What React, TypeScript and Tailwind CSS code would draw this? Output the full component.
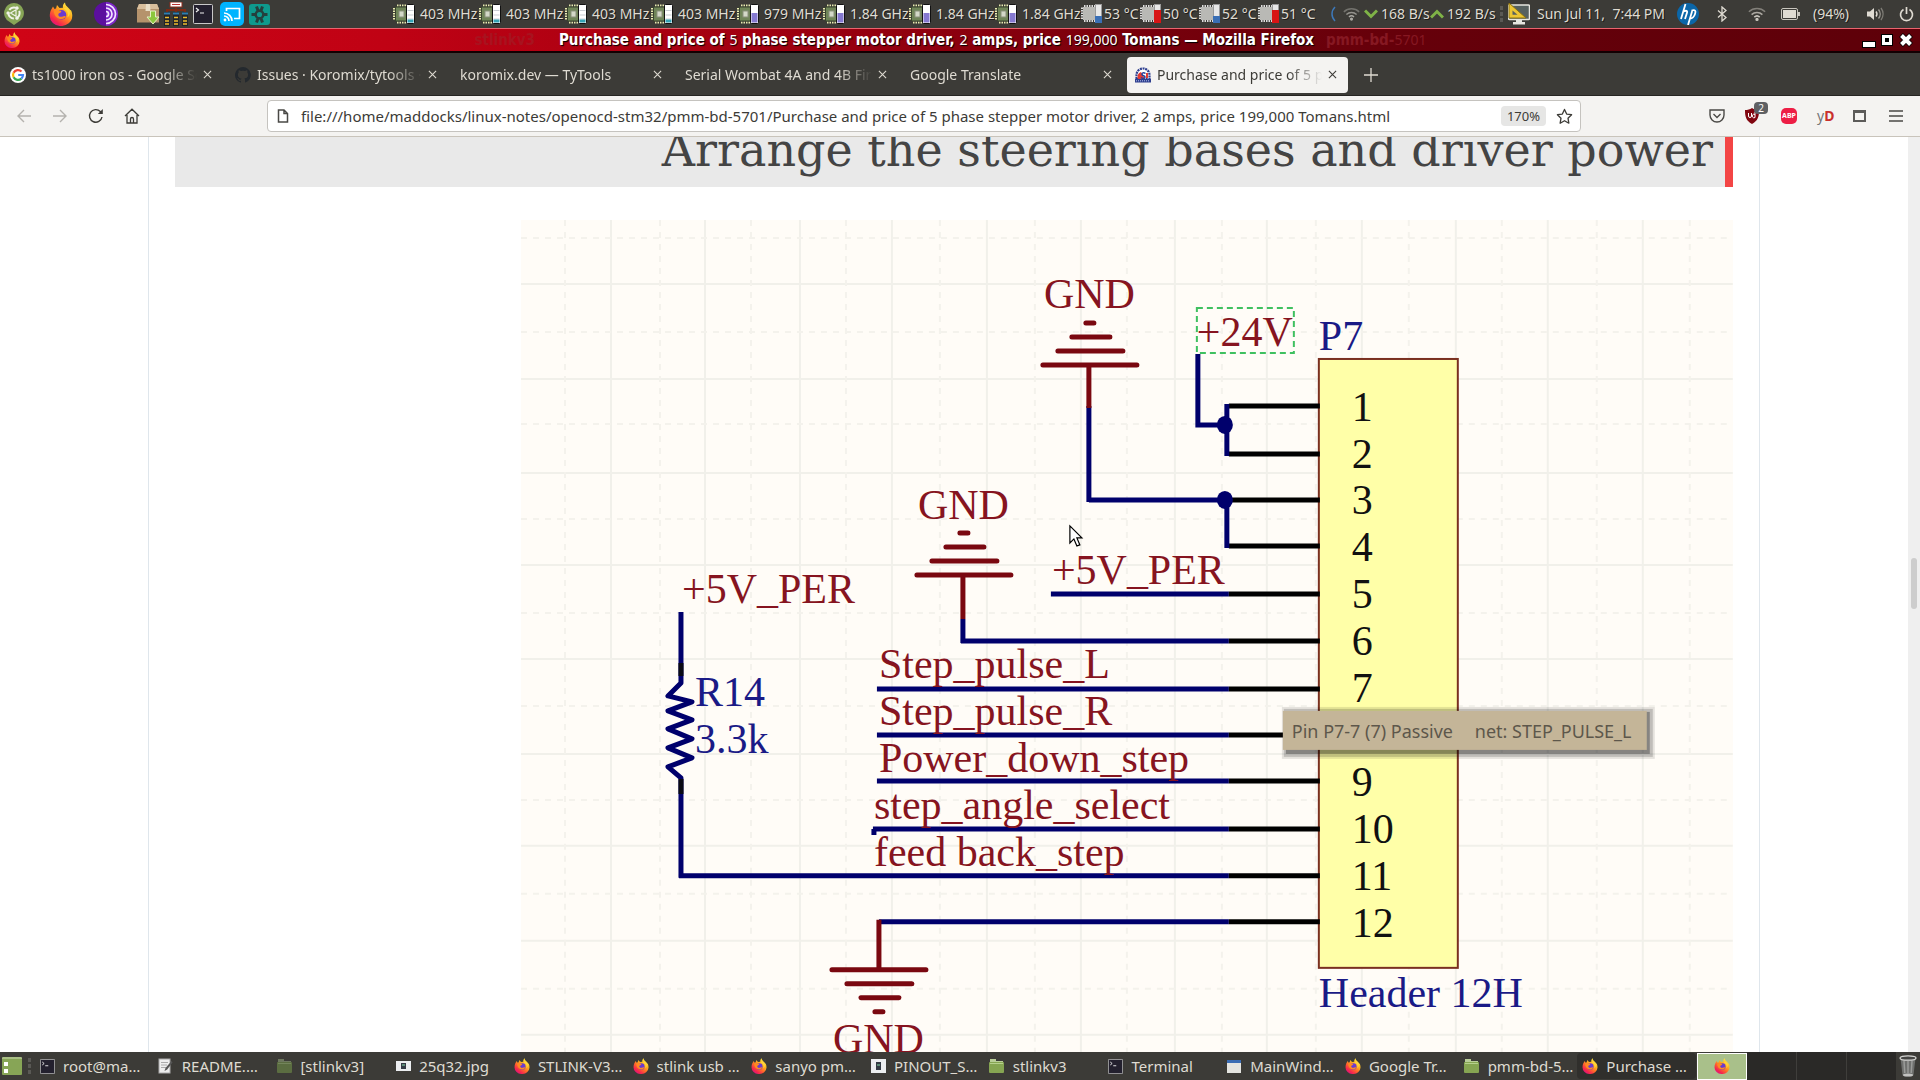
import React from "react";
import type { ReactNode } from "react";

/* ---------- icons ---------- */

function Firefox({ className }: { className: string }) {
  return (
    <svg viewBox="0 0 24 24" className={className} aria-hidden="true">
      <defs>
        <linearGradient id="fx-body" x1="0.85" y1="0.05" x2="0.2" y2="0.95">
          <stop offset="0" stopColor="#fff04a" />
          <stop offset="0.35" stopColor="#ffb01e" />
          <stop offset="0.6" stopColor="#ff6a2a" />
          <stop offset="0.85" stopColor="#f5254f" />
          <stop offset="1" stopColor="#e01580" />
        </linearGradient>
      </defs>
      <path
        d="M2 8 4 4.500 5.500 7 7 6.500 8 3 10.500 6 14 5.800C13.500 3.500 14.500 1.500 16 .5 16 3 18 4.500 20 6.500c.8.800 1.200 1.500 1.300 2l.5-.8C22.800 9.800 23.500 12 23.200 14.500A11.200 9.800 0 0 1 .8 14C.8 11.500 1.200 9.500 2 8Z"
        fill="url(#fx-body)"
      />
      <circle cx="12.500" cy="12.800" r="4.800" fill="#6a3bd0" />
      <path d="M5 8.500c2.500-1.200 4 .3 6 .3 1 0 1.500.5 1.300 1-.6 1.200-2.800 1.200-3 2.700-.1 1.500 1.500 2.700 3.700 2.200 1.800-.4 2.600-1 3.500-.5.500.5-.9 2.800-4 2.900C8 17.200 4.500 13 5 8.500Z" fill="#ff8a22" />
      <path d="M14.500 6.500c3.500 1.500 5.500 5 3.800 9 2.500-1.500 3.600-5 1.500-8-1.500-2-3.500-2.500-5.300-1Z" fill="#ffd53a" />
    </svg>
  );
}

function MateLogo() {
  return (
    <svg viewBox="0 0 20 22" className="h-[22px] w-5" aria-hidden="true">
      <path d="M10 0a10 10 0 0 1 5 18.600L10 22l-5-3.400A10 10 0 0 1 10 0Z" fill="#87a556" />
      <circle cx="10" cy="10" r="5.600" fill="none" stroke="#f0f3e8" strokeWidth="2" strokeDasharray="9.700 2" strokeDashoffset="3" />
      <path d="M6.500 10 12 6.800v6.400Z" fill="none" stroke="#f0f3e8" strokeWidth="1.200" />
      <circle cx="4" cy="10" r="1.600" fill="#f0f3e8" />
      <circle cx="13" cy="4.800" r="1.600" fill="#f0f3e8" />
      <circle cx="13" cy="15.200" r="1.600" fill="#f0f3e8" />
    </svg>
  );
}

function TorIcon() {
  return (
    <svg viewBox="0 0 24 24" className="size-6" aria-hidden="true">
      <circle cx="12" cy="12" r="12" fill="#5b0f9e" />
      <path d="M12 0a12 12 0 0 1 0 24Z" fill="#7d2ac8" />
      <path d="M12 9.500a2.500 2.500 0 0 1 0 5M12 6a6 6 0 0 1 0 12M12 2.500a9.500 9.500 0 0 1 0 19" fill="none" stroke="#f3e6ff" strokeWidth="1.700" />
    </svg>
  );
}

function PackageIcon() {
  return (
    <svg viewBox="0 0 23 22" className="h-[22px] w-[23px]" aria-hidden="true">
      <path d="M2 1h18l2 5v13H0V6Z" fill="#c2a079" />
      <path d="M0 6h22v13.500H0Z" fill="#b5936c" />
      <path d="M2 1h18l2 5H0Z" fill="#d9bf9c" />
      <path d="M9 1h4l.5 7h-5Z" fill="#eadfc8" />
      <path d="M13.500 8h5v6H22l-6 7-6-7h3.500Z" fill="#8cc63c" stroke="#e4f2c4" />
    </svg>
  );
}

function NetworkIcon() {
  return (
    <svg viewBox="0 0 24 24" className="size-6" aria-hidden="true">
      <rect x="6" y="0" width="12" height="5" fill="#fff" stroke="#8c2d1c" />
      <path d="M8 2.500h8" stroke="#b33" />
      <path d="M12 5v5M3 10V8h18v2" fill="none" stroke="#7c2b16" strokeWidth="2" />
      {[0, 9, 18].map((x) => (
        <g key={x}>
          <rect x={x} y="10" width="6" height="14" fill="#20252b" />
          <path d={`M${x} 11.500h6`} stroke="#2f7fb0" strokeWidth="2" />
          <path d={`M${x + 1} 15.500h4M${x + 1} 19h4M${x + 1} 22h4`} stroke="#eebd2c" strokeWidth="1.500" />
        </g>
      ))}
    </svg>
  );
}

function TerminalIcon({ className }: { className: string }) {
  return (
    <svg viewBox="0 0 20 20" className={className} aria-hidden="true">
      <rect x=".5" y=".5" width="19" height="19" rx="1" fill="#23202e" stroke="#c9c9c9" />
      <path d="m3 4 2.500 2L3 8M7 9h4" fill="none" stroke="#f2f2f2" strokeWidth="1.200" />
    </svg>
  );
}

function CastIcon() {
  return (
    <svg viewBox="0 0 24 24" className="size-6" aria-hidden="true">
      <rect width="24" height="24" rx="5" fill="#00b4ff" />
      <path d="M6.500 9V6.500h13v10H14" fill="none" stroke="#fff" strokeWidth="1.700" />
      <path d="M4 11a8 8 0 0 1 8 8M4 14a5 5 0 0 1 5 5" fill="none" stroke="#fff" strokeWidth="1.700" />
      <circle cx="5" cy="18" r="1.400" fill="#fff" />
    </svg>
  );
}

function GearTile() {
  return (
    <svg viewBox="0 0 21 21" className="size-[21px]" aria-hidden="true">
      <rect width="21" height="21" rx="3" fill="#0e9a8d" />
      <g stroke="#24403d" strokeWidth="3">
        <path d="M7.500 2.500l1.500 4M12 14.500l1.500 4M13.500 2.500 12 6.500M9 14.500l-1.500 4M2.500 10.500h4M14.500 10.500h4" />
        <circle cx="10.500" cy="10.500" r="3.800" fill="none" strokeWidth="2.500" />
      </g>
    </svg>
  );
}

function CpuIcon({ busy }: { busy: boolean }) {
  return (
    <svg viewBox="0 0 22 20" className="h-5 w-[22px] shrink-0" aria-hidden="true">
      <path d="M4 1.500h9M4 18.500h9" stroke="#e8ecb0" strokeWidth="2" strokeDasharray="1.500 1" />
      <path d="M1 4v12" stroke="#e8ecb0" strokeWidth="2" strokeDasharray="1.500 1" />
      <rect x="2.500" y="3" width="11" height="14" fill="#6f8558" stroke="#39442c" />
      <rect x="6" y="7" width="5" height="6" fill="#d3d8c8" stroke="#8b917c" />
      <rect x="13.500" y=".5" width="8" height="19" rx="1" fill="#fff" stroke="#111" />
      {busy ? (
        <rect x="14.500" y="9" width="6" height="9.500" fill="#8579d0" />
      ) : (
        <>
          <path d="M14.500 6.500h6M14.500 11h6M14.500 15h6" stroke="#c9cdd2" />
          <rect x="14.500" y="15.500" width="6" height="3" fill="#35a3b5" />
        </>
      )}
    </svg>
  );
}

function HeatIcon({ hot }: { hot: boolean }) {
  return (
    <svg viewBox="0 0 21 20" className="h-5 w-[21px] shrink-0" aria-hidden="true">
      <path d="M3 2h11M3 17h11" stroke="#dcdcdc" strokeWidth="2" strokeDasharray="1.500 1" />
      <path d="M1 3.500v12" stroke="#dcdcdc" strokeWidth="2" strokeDasharray="1.500 1" />
      <rect x="2" y="3" width="12" height="13" fill="#b9b9b5" />
      <rect x="14.500" y=".5" width="6" height="18" fill="#e8e8e8" stroke="#9b9b9b" />
      {hot ? (
        <rect x="14" y="6" width="7" height="13" fill="#d81414" />
      ) : (
        <rect x="14" y="12" width="7" height="7" fill="#3a6fb5" />
      )}
    </svg>
  );
}

function Wifi({ className, color }: { className: string; color: string }) {
  return (
    <svg viewBox="0 0 20 16" className={className} fill="none" stroke={color} strokeWidth="1.700" aria-hidden="true">
      <path d="M1 5.500a13 13 0 0 1 18 0" opacity=".5" />
      <path d="M4 8.700a8.700 8.700 0 0 1 12 0" opacity=".8" />
      <path d="M7 11.500a4.400 4.400 0 0 1 6 0" />
      <circle cx="10" cy="14" r="1" fill={color} />
    </svg>
  );
}

function Chevron({ up }: { up?: boolean }) {
  return (
    <svg viewBox="0 0 14 10" className="h-[10px] w-[14px]" fill="none" stroke="#7fb347" strokeWidth="3" aria-hidden="true">
      {up ? <path d="m1 8.500 6-6 6 6" /> : <path d="m1 1.500 6 6 6-6" />}
    </svg>
  );
}

function MonitorIcon() {
  return (
    <svg viewBox="0 0 22 22" className="size-[22px]" aria-hidden="true">
      <rect x=".5" y="2" width="21" height="14.500" rx="1" fill="#57615f" stroke="#e6e6e0" strokeWidth="1.500" />
      <path d="M8 17h6v2h3v2.500H5V19h3Z" fill="#e6e6e0" />
      <path d="M1 0v15h17Z" fill="#ecc634" stroke="#8b7212" />
      <path d="M4.500 7.500v4.300h5Z" fill="#57615f" />
    </svg>
  );
}

function Close({ className }: { className: string }) {
  return (
    <svg viewBox="0 0 10 10" className={className} stroke="currentColor" strokeWidth="1.200" aria-hidden="true">
      <path d="m1 1 8 8M9 1 1 9" />
    </svg>
  );
}

function FolderIcon({ dim }: { dim?: boolean }) {
  return (
    <svg viewBox="0 0 15 14" className="h-[14px] w-[15px]" aria-hidden="true">
      <path d="M1 0h6v2h7v4H1Z" fill={dim ? "#6d775e" : "#b9cd98"} />
      <rect y="3" width="15" height="11" rx="1" fill={dim ? "#5b6d41" : "#86a552"} />
      <path d="M1 4.500h13" stroke={dim ? "#74855c" : "#b6cf8d"} />
    </svg>
  );
}

function NoteIcon() {
  return (
    <svg viewBox="0 0 15 16" className="h-4 w-[15px]" aria-hidden="true">
      <rect x="1" y="1" width="11" height="14" fill="#ededed" stroke="#aaa" />
      <path d="M3 4.500h7M3 7h6M3 9.500h5" stroke="#aaa" />
      <path d="m13.500 3-6 7-1 3 2.700-1.500 5.300-7Z" fill="#555" />
    </svg>
  );
}

function PictureIcon({ tall }: { tall?: boolean }) {
  return (
    <svg viewBox="0 0 15 14" className="h-[14px] w-[15px]" aria-hidden="true">
      <rect x="0" y={tall ? 0 : 2} width="15" height={tall ? 14 : 10} fill="#eceef0" />
      <rect x="5" y={tall ? 3 : 4} width="5" height={tall ? 8 : 6} fill="#333a44" />
      <path d="M6 6h3" stroke="#8da" />
    </svg>
  );
}

function WindowIcon() {
  return (
    <svg viewBox="0 0 14 13" className="h-[13px] w-[14px]" aria-hidden="true">
      <rect width="14" height="13" fill="#e4e4e0" />
      <rect width="14" height="3" fill="#3a6cb4" />
    </svg>
  );
}

/* ---------- top panel ---------- */

const clocks = ["403 MHz", "403 MHz", "403 MHz", "403 MHz", "979 MHz", "1.84 GHz", "1.84 GHz", "1.84 GHz"];
const temps = ["53 °C", "50 °C", "52 °C", "51 °C"];

function TopPanel() {
  return (
    <header className="flex h-7 shrink-0 items-center overflow-hidden bg-[#3c3b37] text-sm whitespace-nowrap text-[#dfdbd2] [text-shadow:1px_1px_0_#1d1c1a]">
      <div className="flex w-[393px] items-center pl-1">
        <button aria-label="Menu" className="w-[45px]"><MateLogo /></button>
        <button aria-label="Firefox" className="w-[45px]"><Firefox className="size-6" /></button>
        <button aria-label="Tor" className="w-[43px]"><TorIcon /></button>
        <button aria-label="Packages" className="w-[27px]"><PackageIcon /></button>
        <button aria-label="Network" className="w-[29px]"><NetworkIcon /></button>
        <button aria-label="Terminal" className="w-[27px]"><TerminalIcon className="size-5" /></button>
        <button aria-label="Cast" className="w-[29px]"><CastIcon /></button>
        <button aria-label="Settings"><GearTile /></button>
      </div>
      {clocks.map((c, i) => (
        <div key={i} className="flex w-[86px] items-center gap-[5px]">
          <CpuIcon busy={i > 3} />
          <span>{c}</span>
        </div>
      ))}
      {temps.map((t, i) => (
        <div key={i} className="flex w-[59px] items-center gap-[2px]">
          <HeatIcon hot={i % 2 === 1} />
          <span>{t}</span>
        </div>
      ))}
      <div className="ml-auto flex items-center pr-[6px]">
        <svg viewBox="0 0 6 16" className="h-4 w-[6px]" fill="none" stroke="#3d78b8" strokeWidth="1.500" aria-hidden="true">
          <path d="M4 1C0 5 0 11 4 15" />
        </svg>
        <Wifi className="ml-[6px] h-[18px] w-[17px]" color="#aaa9a3" />
        <span className="ml-1 flex w-[66px] items-center gap-[3px]"><Chevron />168 B/s</span>
        <span className="flex w-[70px] items-center gap-[3px]"><Chevron up />192 B/s</span>
        <span className="flex flex-col gap-[2px]">
          {[0, 1, 2].map((n) => <i key={n} className="block h-1 w-[3px] bg-[#5a5955]" />)}
        </span>
        <span className="ml-[5px]"><MonitorIcon /></span>
        <time className="ml-[7px] w-[140px]">Sun Jul 11,&nbsp; 7:44 PM</time>
        <svg viewBox="0 0 22 22" className="size-[22px]" role="img" aria-label="hp">
          <circle cx="11" cy="11" r="11" fill="#0b66a8" />
          <g fill="none" stroke="#fff" strokeWidth="1.800">
            <path d="M8.500 1 4 16M6.500 8.500c3-1.500 4-.5 3.500 1.200L8 16M15.500 7l-4.500 15M14.500 7.500c4-1 4.500.5 3.500 3.500s-2.500 4.500-5 4.500" />
          </g>
        </svg>
        <svg viewBox="0 0 10 16" className="ml-[18px] h-4 w-[10px]" fill="none" stroke="#dfdbd2" strokeWidth="1.300" aria-hidden="true">
          <path d="m1 4.500 8 7-4 3.500V1l4 3.500-8 7" />
        </svg>
        <Wifi className="ml-[21px] h-4 w-[18px]" color="#c9c6be" />
        <svg viewBox="0 0 19 12" className="ml-[15px] h-3 w-[19px]" aria-hidden="true">
          <rect x=".5" y=".5" width="16" height="11" rx="1.500" fill="none" stroke="#c9c6be" />
          <rect x="2" y="2" width="13" height="8" fill="#dfdbd2" />
          <path d="M18 4v4" stroke="#c9c6be" strokeWidth="2" />
        </svg>
        <span className="ml-[13px] w-[54px]">(94%)</span>
        <svg viewBox="0 0 18 14" className="h-[14px] w-[18px]" fill="none" stroke="#dfdbd2" strokeWidth="1.400" aria-hidden="true">
          <path d="M0 4.500h3L7 1v12L3 9.500H0Z" fill="#dfdbd2" stroke="none" />
          <path d="M9 4.500a4 4 0 0 1 0 5" />
          <path d="M11.500 2.500a7 7 0 0 1 0 9" opacity=".6" />
          <path d="M14 1a10 10 0 0 1 0 12" opacity=".4" />
        </svg>
        <svg viewBox="0 0 15 16" className="ml-[14px] h-4 w-[15px]" fill="none" stroke="#dfdbd2" strokeWidth="1.700" aria-hidden="true">
          <path d="M4.500 3.500a6 6 0 1 0 6 0M7.500 1v7" />
        </svg>
      </div>
    </header>
  );
}

/* ---------- window title ---------- */

function Digits({ children }: { children: ReactNode }) {
  return <span className="font-['Noto_Sans'] text-sm font-normal">{children}</span>;
}

function TitleBar() {
  return (
    <div className="flex h-[25px] shrink-0 items-center border-t border-b-2 border-t-[#e8646e] border-b-[#120002] bg-[linear-gradient(90deg,#d00416_0%,#c00214_20%,#a00010_40%,#7a000c_58%,#66000a_72%,#5e0009_100%)] pr-[7px] pl-1 font-['DejaVu_Sans_Condensed'] text-[15px] leading-5 font-bold whitespace-pre text-white [text-shadow:1px_1px_1px_#000]">
      <div className="flex flex-1 items-center">
        <Firefox className="size-4" />
        <span className="mr-[18px] ml-auto text-[#a8131f] [text-shadow:none]">stlinkv3</span>
      </div>
      <h1 className="ml-[6px]">
        Purchase and price of <Digits>5</Digits> phase stepper motor driver, <Digits>2</Digits> amps, price{" "}
        <Digits>199,000</Digits> Tomans — Mozilla Firefox
      </h1>
      <div className="flex-1">
        <span className="ml-3 text-[#861822] [text-shadow:none]">pmm-bd-<Digits>5701</Digits></span>
      </div>
      <div className="flex items-center gap-[7px]">
        <button aria-label="Minimize" className="mt-2 h-[5px] w-[12px] bg-white outline outline-black" />
        <button aria-label="Maximize" className="size-[10px] border-[3px] border-white bg-black outline outline-black" />
        <button aria-label="Close window">
          <svg viewBox="0 0 14 14" className="size-[14px]" aria-hidden="true">
            <path d="m2 2 10 10M12 2 2 12" stroke="#000" strokeWidth="5.500" />
            <path d="m2.500 2.500 9 9M11.500 2.500l-9 9" stroke="#fff" strokeWidth="4" />
          </svg>
        </button>
      </div>
    </div>
  );
}

/* ---------- browser tabs ---------- */

function GoogleIcon() {
  return (
    <svg viewBox="0 0 16 16" className="size-4 shrink-0" aria-hidden="true">
      <circle cx="8" cy="8" r="8" fill="#fff" />
      <g fill="none" strokeWidth="2.200">
        <path d="M11.500 4.500A5 5 0 0 0 3.600 5.700" stroke="#ea4335" />
        <path d="M3.600 5.700a5 5 0 0 0 0 4.600" stroke="#fbbc05" />
        <path d="M3.600 10.300a5 5 0 0 0 7.800 1.300" stroke="#34a853" />
        <path d="M11.400 11.600A5 5 0 0 0 13 8H8.200" stroke="#4285f4" />
      </g>
    </svg>
  );
}

function GithubIcon() {
  return (
    <svg viewBox="0 0 16 16" className="size-4 shrink-0" fill="#24292e" aria-hidden="true">
      <path d="M8 0a8 8 0 0 0-2.500 15.600c.4.100.5-.2.500-.4v-1.400c-2.200.500-2.700-1-2.700-1-.4-.9-.9-1.200-.9-1.200-.7-.5.100-.5.100-.5.800.1 1.200.8 1.200.8.700 1.300 1.900.9 2.300.7.100-.5.300-.9.500-1.100-1.800-.2-3.600-.9-3.600-4 0-.9.300-1.600.8-2.100-.1-.2-.4-1 .1-2.100 0 0 .7-.2 2.200.8a7.500 7.500 0 0 1 4 0c1.500-1 2.200-.8 2.200-.8.400 1.100.2 1.900.1 2.100.5.600.8 1.300.8 2.100 0 3.100-1.900 3.700-3.700 3.900.3.300.6.800.6 1.500v2.200c0 .2.100.5.600.4A8 8 0 0 0 8 0Z" />
    </svg>
  );
}

function ShopIcon() {
  return (
    <svg viewBox="0 0 16 16" className="size-4 shrink-0" aria-hidden="true">
      <path d="M1.500 12V8a6.500 6.500 0 0 1 13 0v4Z" fill="#fff" stroke="#2e3f8f" strokeWidth="2.200" strokeDasharray="2 .7" />
      <path d="M3 12a5 5 0 0 1 3-7l4 7Z" fill="#e33b32" />
      <path d="M10.500 6.500c-2-1.500-4-.5-3.500 1s3 1 3 2.500-2.500 2-4 .5" fill="none" stroke="#27409a" strokeWidth="1.500" />
      <path d="M12 6v5" stroke="#e33b32" strokeWidth="2" />
      <rect y="12" width="16" height="3.500" fill="#2e3f8f" />
      <path d="M1 13.800h14" stroke="#b9c2ea" strokeDasharray="1 1" />
    </svg>
  );
}

const tabs: { title: string; icon?: ReactNode; active?: boolean }[] = [
  { title: "ts1000 iron os - Google Search", icon: <GoogleIcon /> },
  { title: "Issues · Koromix/tytools · GitHub", icon: <GithubIcon /> },
  { title: "koromix.dev — TyTools" },
  { title: "Serial Wombat 4A and 4B Firmware" },
  { title: "Google Translate" },
  { title: "Purchase and price of 5 phase stepper", icon: <ShopIcon />, active: true },
];

function TabStrip() {
  return (
    <nav className="flex h-[43px] shrink-0 items-center gap-1 border-b border-[#262522] bg-[#3c3b37] pt-px pl-[2px] text-sm text-[#dfdbd2]">
      {tabs.map((t) => (
        <div
          key={t.title}
          className={
            t.active
              ? "flex h-9 w-[221px] items-center gap-[6px] rounded bg-[#f4f3f1] pr-[11px] pl-2 text-[#3c3b37]"
              : "flex h-9 w-[221px] items-center gap-[6px] pr-[11px] pl-2"
          }
        >
          {t.icon}
          <a
            href="#tab"
            className="min-w-0 flex-1 overflow-hidden whitespace-nowrap [mask-image:linear-gradient(90deg,#000_calc(100%-34px),transparent)]"
          >
            {t.title}
          </a>
          <button aria-label={`Close ${t.title}`} className="shrink-0">
            <Close className="size-[9px]" />
          </button>
        </div>
      ))}
      <button aria-label="New tab" className="ml-3">
        <svg viewBox="0 0 14 14" className="size-[14px]" stroke="#dfdbd2" strokeWidth="1.300" aria-hidden="true">
          <path d="M7 0v14M0 7h14" />
        </svg>
      </button>
    </nav>
  );
}

/* ---------- address bar ---------- */

function Toolbar() {
  return (
    <div className="flex h-[41px] shrink-0 items-center border-b border-[#c9c4bb] bg-[#f4f3f1] pr-[17px] pl-4 text-[#3c3b37]">
      <div className="flex w-[251px] items-center gap-5">
        <button aria-label="Back">
          <svg viewBox="0 0 16 16" className="size-4" fill="none" stroke="#b4b2ae" strokeWidth="1.400" aria-hidden="true"><path d="M8 2 2 8l6 6M2 8h13" /></svg>
        </button>
        <button aria-label="Forward">
          <svg viewBox="0 0 16 16" className="size-4" fill="none" stroke="#b4b2ae" strokeWidth="1.400" aria-hidden="true"><path d="m8 2 6 6-6 6M14 8H1" /></svg>
        </button>
        <button aria-label="Reload">
          <svg viewBox="0 0 16 16" className="size-4" fill="none" stroke="#3c3b37" strokeWidth="1.400" aria-hidden="true"><path d="M14 9A6.300 6.300 0 1 1 12.300 3.500l1.300 1.500" /><path d="M14.800 1v5H9.800Z" fill="#3c3b37" stroke="none" /></svg>
        </button>
        <button aria-label="Home">
          <svg viewBox="0 0 16 16" className="size-4" fill="none" stroke="#3c3b37" strokeWidth="1.300" aria-hidden="true"><path d="M1 8 8 1.200 15 8M3 7v8h10V7M6.500 15v-4a1.500 1.500 0 0 1 3 0v4" /></svg>
        </button>
      </div>
      <div className="flex h-8 max-w-[1314px] flex-1 items-center rounded border border-[#c5c3bf] bg-white pr-[7px] pl-[9px]">
        <svg viewBox="0 0 12 14" className="h-[14px] w-3 shrink-0" fill="none" stroke="#4a4946" strokeWidth="1.500" aria-hidden="true"><path d="M1.500 1h5.500l3.500 3.500V13h-9ZM7 1v3.500h3.500" /></svg>
        <input
          aria-label="Address"
          className="ml-3 h-[30px] min-w-0 flex-1 bg-transparent text-[15px] outline-none"
          defaultValue="file:///home/maddocks/linux-notes/openocd-stm32/pmm-bd-5701/Purchase and price of 5 phase stepper motor driver, 2 amps, price 199,000 Tomans.html"
        />
        <button className="h-5 w-[45px] rounded-sm bg-[#e6e6e5] text-[13px] leading-5">170%</button>
        <button aria-label="Bookmark" className="ml-[10px]">
          <svg viewBox="0 0 18 18" className="size-[17px]" fill="none" stroke="#3c3b37" strokeWidth="1.400" strokeLinejoin="round" aria-hidden="true"><path d="m9 1.500 2.300 4.900 5.200.7-3.800 3.700.9 5.300L9 13.500l-4.600 2.600.9-5.300L1.500 7.100l5.200-.7Z" /></svg>
        </button>
      </div>
      <div className="ml-auto flex items-center">
        <button aria-label="Pocket" className="w-9">
          <svg viewBox="0 0 16 14" className="h-[14px] w-4" fill="none" stroke="#4a4946" strokeWidth="1.400" aria-hidden="true"><path d="M1 1h14v5a7 7 0 0 1-14 0Z" /><path d="m4.500 5 3.500 3.400L11.500 5" /></svg>
        </button>
        <button aria-label="uBlock, 2 blocked" className="relative w-9">
          <svg viewBox="0 0 14 16" className="h-4 w-[14px]" aria-hidden="true"><path d="M7 0c2 1.500 4.500 2 7 2 0 7-1 10.500-7 14C1 12.500 0 9 0 2c2.500 0 5-.5 7-2Z" fill="#800610" /><path d="M3.500 5v3a1.500 1.500 0 0 0 3 0V5M10 4v5.500a1.800 1.800 0 1 1 0-3" fill="none" stroke="#fff" /></svg>
          <span className="absolute -top-[6px] left-[9px] h-3 w-[14px] rounded-sm bg-[#5f6164] text-center text-[10px] leading-3 text-white">2</span>
        </button>
        <button aria-label="Adblock Plus" className="w-9">
          <span className="block size-4 rounded-[5px] bg-[#ed1e45] text-center text-[7px] leading-4 font-bold text-white">ABP</span>
        </button>
        <button className="w-9 text-left text-sm leading-5 text-[#777]">y<b className="text-[#c9302c]">D</b></button>
        <button aria-label="Sidebar" className="w-9"><span className="block h-3 w-[13px] border-2 border-t-[3px] border-[#5c5b59]" /></button>
        <button aria-label="Application menu">
          <svg viewBox="0 0 14 12" className="h-3 w-[14px]" stroke="#4a4946" strokeWidth="1.400" aria-hidden="true"><path d="M0 1h14M0 6h14M0 11h14" /></svg>
        </button>
      </div>
    </div>
  );
}

/* ---------- schematic ---------- */

const RED = "#7a0810";
const NAVY = "#00006c";
const LABEL = "#861420";
const BLUE = "#1a1a86";

const solidX = [611, 705, 800, 892, 987, 1081, 1175, 1267, 1362, 1456, 1548, 1643];
const dashedX = [565, 660, 751, 846, 940, 1035, 1127, 1222, 1316, 1409, 1502, 1597, 1690];
const solidY = [284, 379, 473, 565, 659, 754, 846, 941, 1035];
const dashedY = [238, 332, 424, 519, 613, 706, 800, 894, 989];

const pins = [
  { n: "1", y: 406, text: 421, from: 1229 },
  { n: "2", y: 454, text: 468, from: 1229 },
  { n: "3", y: 500, text: 514, from: 1089 },
  { n: "4", y: 546, text: 561, from: 1229 },
  { n: "5", y: 594, text: 608, from: 1051 },
  { n: "6", y: 641, text: 655, from: 961 },
  { n: "7", y: 689, text: 702, from: 877 },
  { n: "", y: 735, text: 749, from: 877 },
  { n: "9", y: 781, text: 796, from: 877 },
  { n: "10", y: 829, text: 843, from: 873 },
  { n: "11", y: 876, text: 890, from: 679 },
  { n: "12", y: 922, text: 937, from: 879 },
];

function Ground({ x, y, down }: { x: number; y: number; down?: boolean }) {
  const s = down ? 1 : -1;
  return (
    <path
      d={`M${x - 47} ${y}h94M${x - 32} ${y + s * 14}h65M${x - 18} ${y + s * 28}h38M${x - 4} ${y + s * 42}h8`}
      stroke={RED}
      strokeWidth="5"
      strokeLinecap="round"
    />
  );
}

function Schematic() {
  return (
    <svg viewBox="521 220 1212 856" className="mt-[33px] ml-auto block w-7/9 bg-[#fffcf7]" role="img" aria-label="Header P7 pinout schematic">
      <g stroke="#f1f0ea" strokeWidth="2">
        {solidX.map((x) => <path key={x} d={`M${x} 220v856`} />)}
        {solidY.map((y) => <path key={y} d={`M521 ${y}h1212`} />)}
        <g strokeDasharray="6 6" stroke="#f4f2ec">
          {dashedX.map((x) => <path key={x} d={`M${x} 220v856`} />)}
          {dashedY.map((y) => <path key={y} d={`M521 ${y}h1212`} />)}
        </g>
      </g>

      <rect x="1319" y="359" width="139" height="609" fill="#ffffa8" stroke="#7a3020" strokeWidth="2" />

      <g fill="none" strokeWidth="5">
        {pins.map((p) => (
          <g key={p.y}>
            {p.from < 1229 && <path d={`M${p.from} ${p.y}H1229`} stroke={NAVY} />}
            <path d={`M1229 ${p.y}H1320`} stroke="#000" />
          </g>
        ))}
        <g stroke={NAVY}>
          <path d="M1198 354v71h27" />
          <path d="M1227 404v52M1227 500v48" />
          <path d="M1089 406v96M963 619v24M874 829v6" />
          <path d="M681 612v71l-13 13 24 6-24 9 24 9-24 9 24 10-24 9 24 10-24 9 13 11V878" strokeLinejoin="round" />
        </g>
        <path d="M681 663v13M681 779v15" stroke="#0a0a14" />
        <path d="M1089 365v43M963 575v44M879 920v50" stroke={RED} />
      </g>
      <g fill={NAVY}>
        <ellipse cx="1225" cy="425" rx="8" ry="9" />
        <ellipse cx="1225" cy="500" rx="8" ry="9" />
      </g>
      <Ground x={1090} y={365} />
      <Ground x={964} y={575} />
      <Ground x={879} y={970} down />
      <rect x="1197" y="308" width="97" height="45" fill="none" stroke="#3fc060" strokeWidth="2" strokeDasharray="6 4" />

      <g fontFamily="Liberation Serif, serif" fontSize="42">
        <g fill={LABEL}>
          <text x="1044" y="308">GND</text>
          <text x="918" y="519">GND</text>
          <text x="833" y="1053">GND</text>
          <text x="1197" y="346">+24V</text>
          <text x="1052" y="584">+5V_PER</text>
          <text x="682" y="603">+5V_PER</text>
          <text x="879" y="678">Step_pulse_L</text>
          <text x="879" y="725">Step_pulse_R</text>
          <text x="879" y="772">Power_down_step</text>
          <text x="874" y="819">step_angle_select</text>
          <text x="874" y="866">feed back_step</text>
        </g>
        <g fill={BLUE}>
          <text x="1319" y="350">P7</text>
          <text x="695" y="706">R14</text>
          <text x="695" y="753">3.3k</text>
          <text x="1319" y="1007">Header 12H</text>
        </g>
        <g fill="#111">
          {pins.filter((p) => p.n).map((p) => <text key={p.n} x="1352" y={p.text}>{p.n}</text>)}
        </g>
      </g>

      <g fill="#000">
        <rect x="1282" y="707" width="373" height="52" opacity=".1" />
        <rect x="1284" y="709" width="369" height="48" opacity=".16" />
        <rect x="1286" y="712" width="364" height="42" opacity=".3" />
      </g>
      <rect x="1283" y="711" width="364" height="39" fill="#c4b598" />
      <g fontFamily="Noto Sans, sans-serif" fontSize="18" fill="#5d574b">
        <text x="1292" y="738">Pin P7-7 (7) Passive</text>
        <text x="1475" y="738">net: STEP_PULSE_L</text>
      </g>

      <path d="M1070 526v17l4-4 3 7 3-1-3-7h5Z" fill="#fff" stroke="#000" strokeWidth="1.200" />
    </svg>
  );
}

/* ---------- page ---------- */

function Page() {
  return (
    <main className="flex min-h-0 flex-1 overflow-hidden bg-white">
      <div className="min-w-0 flex-1">
        <article className="mx-auto w-full max-w-[1612px] border-x border-[#dfe6ec] px-[26px]">
          <h2 className="h-[50px] overflow-hidden border-r-8 border-[#f34545] bg-[#e9e9e9] pr-3 text-right font-['DejaVu_Serif'] text-[46px] leading-[26px] whitespace-nowrap text-[#444]">
            Arrange the steering bases and driver power
          </h2>
          <Schematic />
        </article>
      </div>
      <div className="flex w-3 shrink-0 flex-col items-center bg-[#efefef]">
        <div className="mt-[421px] h-[51px] w-[6px] rounded-full bg-[#cdcdcd]" />
      </div>
    </main>
  );
}

/* ---------- taskbar ---------- */

const windows: { label: string; icon: ReactNode; active?: boolean }[] = [
  { label: "root@ma…", icon: <TerminalIcon className="size-[15px]" /> },
  { label: "README.…", icon: <NoteIcon /> },
  { label: "[stlinkv3]", icon: <FolderIcon dim /> },
  { label: "25q32.jpg", icon: <PictureIcon /> },
  { label: "STLINK-V3…", icon: <Firefox className="size-4" /> },
  { label: "stlink usb …", icon: <Firefox className="size-4" /> },
  { label: "sanyo pm…", icon: <Firefox className="size-4" /> },
  { label: "PINOUT_S…", icon: <PictureIcon tall /> },
  { label: "stlinkv3", icon: <FolderIcon /> },
  { label: "Terminal", icon: <TerminalIcon className="size-[15px]" /> },
  { label: "MainWind…", icon: <WindowIcon /> },
  { label: "Google Tr…", icon: <Firefox className="size-4" /> },
  { label: "pmm-bd-5…", icon: <FolderIcon /> },
  { label: "Purchase …", icon: <Firefox className="size-4" />, active: true },
];

function Taskbar() {
  return (
    <footer className="flex h-7 shrink-0 items-center bg-[#3c3b37] text-[15px] whitespace-nowrap text-[#dfdbd2] [text-shadow:1px_1px_0_#1d1c1a]">
      <button aria-label="Show desktop" className="ml-[2px] flex h-[18px] w-5 flex-col justify-center gap-[3px] rounded-[1px] border-t-2 border-[#a9bf85] bg-[#87a556] pl-[2px]">
        <i className="block h-1 w-1 bg-white" />
        <i className="block h-1 w-1 bg-white" />
      </button>
      <span className="ml-[6px] flex w-[6px] flex-col gap-[2px]">
        {[0, 1, 2].map((n) => <i key={n} className="block h-1 w-[3px] bg-[#5a5955]" />)}
      </span>
      {windows.map((w) => (
        <button
          key={w.label}
          className={
            w.active
              ? "flex h-[26px] min-w-0 flex-1 items-center gap-2 rounded-sm bg-[#302f2c] pl-[5px]"
              : "flex h-[26px] min-w-0 flex-1 items-center gap-2 pl-[5px]"
          }
        >
          <span className="flex w-4 shrink-0 justify-center">{w.icon}</span>
          <span className="overflow-hidden">{w.label}</span>
        </button>
      ))}
      <div className="ml-[1px] flex h-full shrink-0">
        <button aria-label="Workspace 1" className="flex h-[27px] w-[50px] items-center justify-center self-center border border-white bg-[#a9c08a]">
          <Firefox className="size-4" />
        </button>
        <button aria-label="Workspace 2" className="w-[50px] border-r border-[#3f3e3b] bg-[#2a2927]" />
        <button aria-label="Workspace 3" className="w-[50px] border-r border-[#3f3e3b] bg-[#2a2927]" />
        <button aria-label="Workspace 4" className="w-[49px] bg-[#2a2927]" />
        <button aria-label="Trash" className="flex w-6 items-center justify-center">
          <svg viewBox="0 0 18 22" className="h-[22px] w-[18px]" aria-hidden="true">
            <path d="m1.500 3 2 17c0 2 11 2 11 0l2-17Z" fill="#6f706e" />
            <path d="m5 6 .8 12M9 6v12M13 6l-.8 12" stroke="#9a9b99" strokeWidth="1.500" />
            <ellipse cx="9" cy="3" rx="8" ry="2.200" fill="#454543" stroke="#d5d5d3" strokeWidth="1.300" />
            <ellipse cx="9" cy="20" rx="5" ry="1.500" fill="#c2c2c0" />
          </svg>
        </button>
      </div>
    </footer>
  );
}

export default function App() {
  return (
    <div className="flex h-screen flex-col overflow-hidden bg-[#3c3b37] font-['Noto_Sans','Open_Sans',sans-serif]">
      <TopPanel />
      <TitleBar />
      <TabStrip />
      <Toolbar />
      <Page />
      <Taskbar />
    </div>
  );
}
